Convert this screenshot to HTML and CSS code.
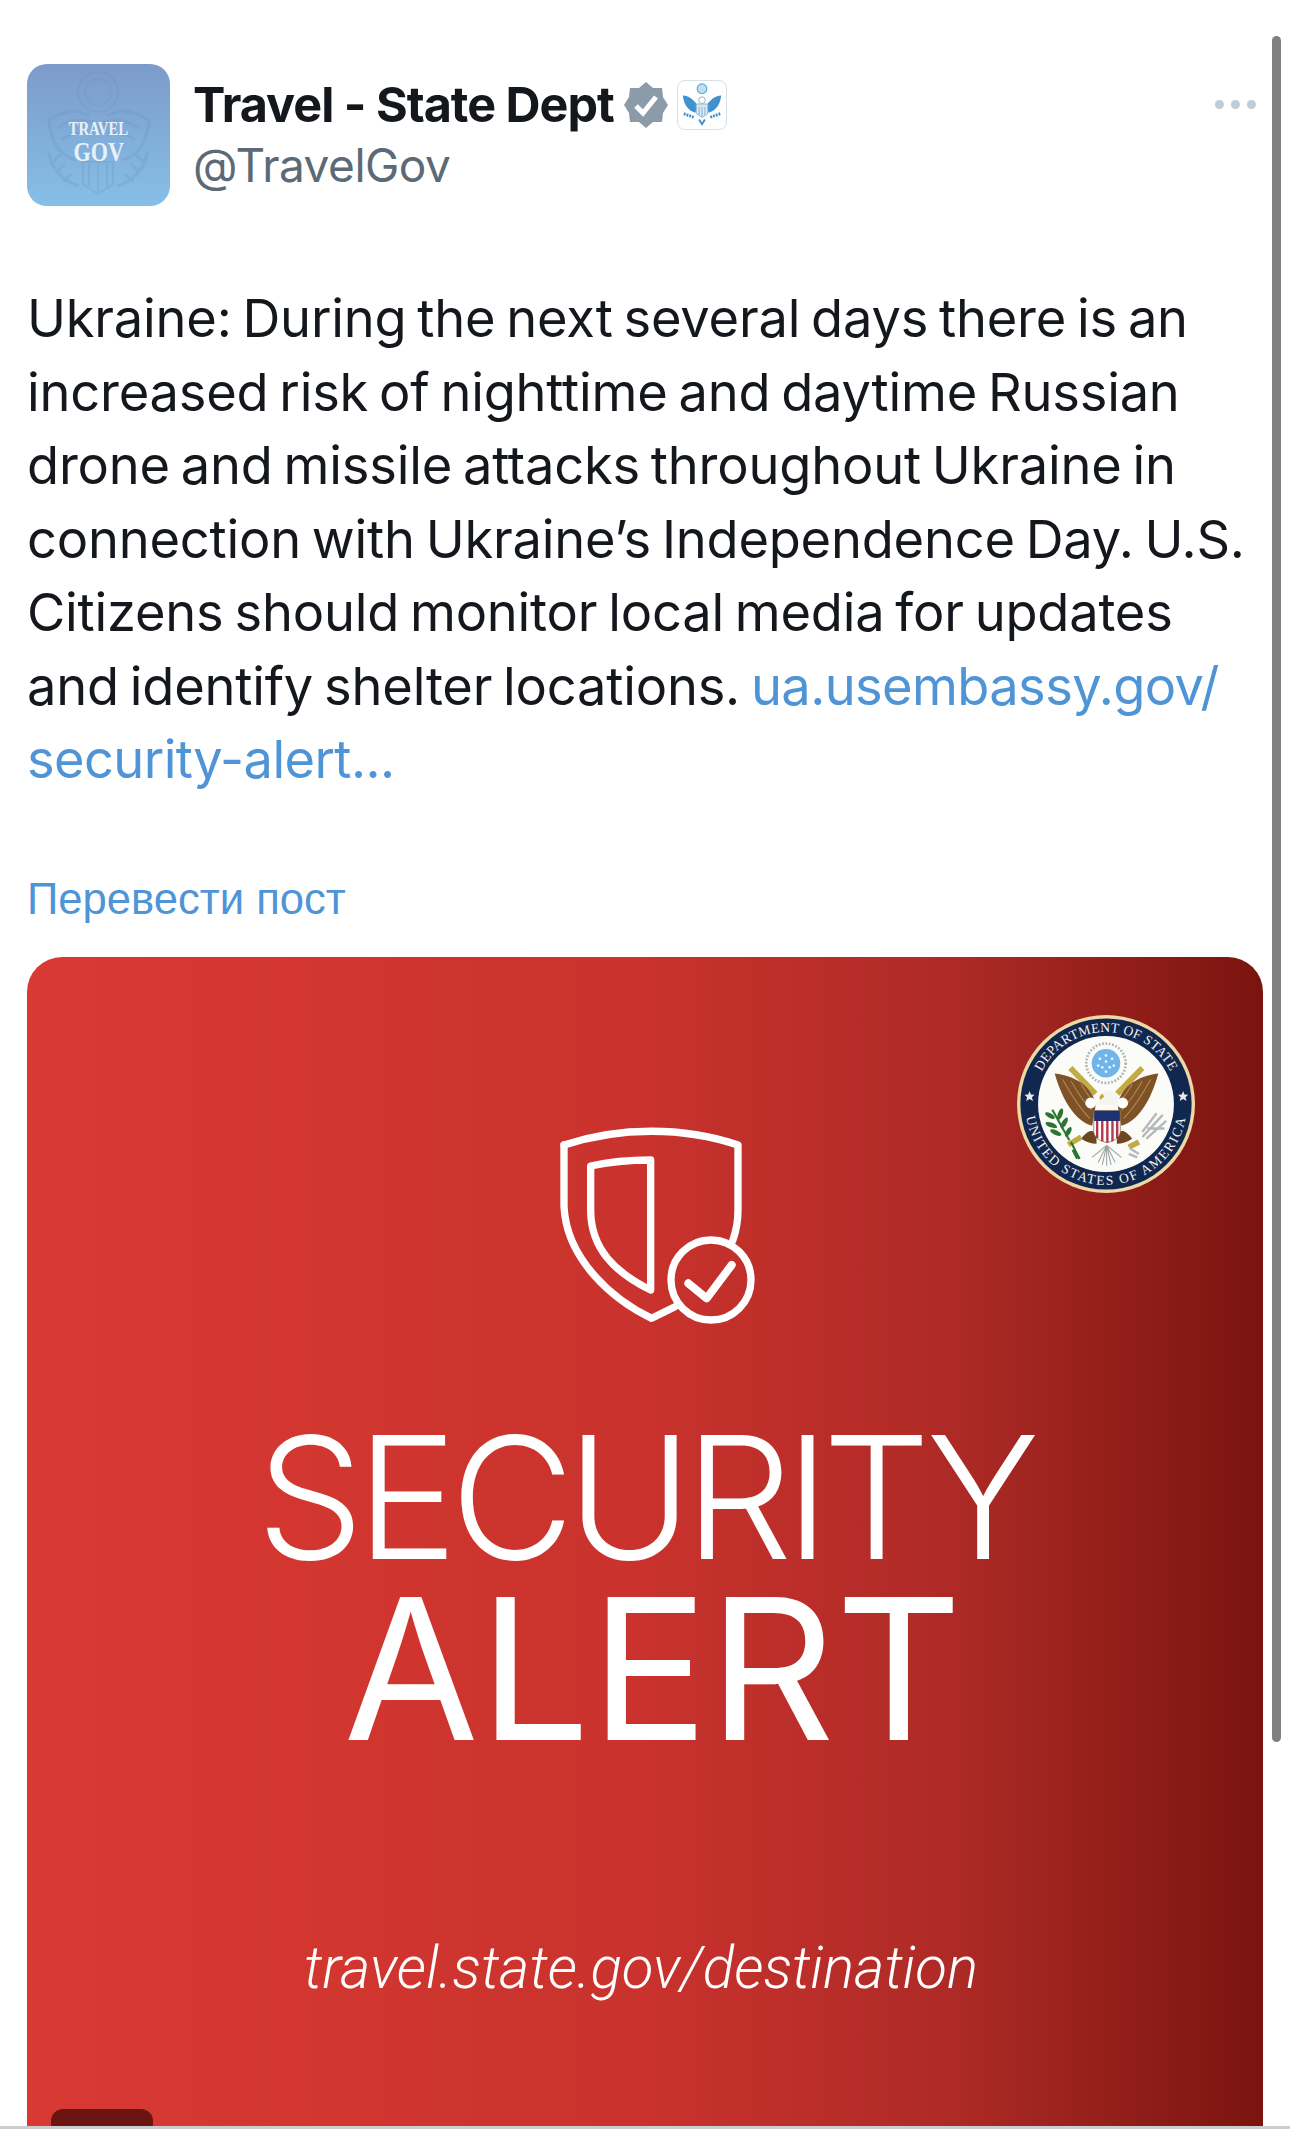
FILE: index.html
```html
<!DOCTYPE html>
<html lang="en">
<head>
<meta charset="utf-8">
<title>Travel - State Dept</title>
<link rel="stylesheet" href="styles.css">
</head>
<body>
<main class="post">
  <header class="head">
    <div class="avatar">
      <svg class="avatar-eagle" viewBox="0 0 143 143" aria-hidden="true">
        <g fill="none" stroke="#5f86b8" stroke-opacity=".18">
          <circle cx="71" cy="28" r="20" stroke-width="1.5"/>
          <circle cx="71" cy="28" r="13" stroke-width="3" stroke-dasharray="2 2"/>
          <path d="M62 52C48 44 38 46 22 56C24 76 30 90 48 96M66 58C52 54 44 56 30 64M62 70C50 68 42 70 34 76" stroke-width="3"/>
          <path d="M80 52C94 44 104 46 122 56C120 76 114 90 96 96M76 58C90 54 98 56 112 64M80 70C92 68 100 70 108 76" stroke-width="3"/>
          <path d="M22 88C24 104 34 116 52 122M34 90L26 98M38 100L30 108M44 110L36 118M120 88C118 104 108 116 90 122M108 90L116 98M104 100L112 108M98 110L106 118" stroke-width="3"/>
          <path d="M56 98V120L71 130L86 120V98H56ZM62 100V122M71 100V128M80 100V122" stroke-width="2"/>
        </g>
      </svg>
      <div class="avatar-word">
        <span class="avatar-travel">TRAVEL</span>
        <span class="avatar-gov">GOV</span>
      </div>
    </div>
    <div class="who">
      <div class="name-row">
        <span class="name">Travel - State Dept</span>
        <svg class="verified" viewBox="0 0 44 48" aria-hidden="true">
          <path d="M22 1L29 7L38 7L39 16L44 24L39 32L38 41L29 41L22 47L15 41L6 41L5 32L0 24L5 16L6 7L15 7Z" fill="#8c9baa"/>
          <path d="M12 25L19 32L32 16" fill="none" stroke="#fff" stroke-width="5"/>
        </svg>
        <span class="affiliate">
          <svg viewBox="0 0 50 50" aria-hidden="true">
            <circle cx="25" cy="8" r="5" fill="#bfe0f3" stroke="#5da5d8" stroke-width="1.2"/>
            <path d="M21 26C17 20 11 15 5 15C6 23 9 30 18 33Z" fill="#3f92cf"/>
            <path d="M29 26C33 20 39 15 45 15C44 23 41 30 32 33Z" fill="#3f92cf"/>
            <path d="M19 24H31V34L25 38L19 34Z" fill="#dbe9f3" stroke="#8fb4cf" stroke-width="1"/>
            <path d="M22 27V35M25 27V37M28 27V35" stroke="#7fb2d6" stroke-width="1"/>
            <circle cx="25" cy="20" r="3.5" fill="#fff" stroke="#8fb4cf"/>
            <path d="M6 34L17 38M44 34L33 38" fill="none" stroke="#3f92cf" stroke-width="3" stroke-dasharray="2 1"/>
            <path d="M22 40L25 45L28 40" fill="none" stroke="#3f92cf" stroke-width="2"/>
          </svg>
        </span>
      </div>
      <div class="handle">@TravelGov</div>
    </div>
    <div class="more" aria-label="More"><i></i><i></i><i></i></div>
  </header>

  <p class="body-text">Ukraine: During the next several days there is an<br>
increased risk of nighttime and daytime Russian<br>
drone and missile attacks throughout Ukraine in<br>
connection with Ukraine’s Independence Day. U.S.<br>
Citizens should monitor local media for updates<br>
and identify shelter locations. <a class="link" href="#">ua.usembassy.gov/<br>
security-alert...</a></p>

  <a class="translate" href="#">Перевести пост</a>

  <section class="card">
    <svg class="seal" viewBox="111 166 524 524" aria-hidden="true">
      <defs>
        <path id="arcTop" d="M161 428A212 212 0 0 1 585 428"/>
        <path id="arcBottom" d="M135 428A238 238 0 0 0 611 428"/>
      </defs>
      <circle cx="373" cy="428" r="262" fill="#ecd9a6"/>
      <circle cx="373" cy="428" r="252" fill="#10274f"/>
      <circle cx="373" cy="428" r="200" fill="#fbfbf8"/>
      <text class="seal-text seal-top"><textPath href="#arcTop" startOffset="50%" text-anchor="middle">DEPARTMENT OF STATE</textPath></text>
      <text class="seal-text seal-bottom"><textPath href="#arcBottom" startOffset="50%" text-anchor="middle">UNITED STATES OF AMERICA</textPath></text>
      <path d="M148 390l4 10 11 1-8 7 3 11-10-6-10 6 3-11-8-7 11-1zM600 390l4 10 11 1-8 7 3 11-10-6-10 6 3-11-8-7 11-1z" fill="#e8e8e8"/>
      <circle cx="373" cy="308" r="58" fill="none" stroke="#aab4b8" stroke-width="8" stroke-dasharray="5 5"/>
      <circle cx="373" cy="308" r="42" fill="#6fb4ea"/>
      <g fill="#e8f4fc">
        <circle cx="373" cy="285" r="4"/><circle cx="355" cy="295" r="4"/><circle cx="391" cy="295" r="4"/>
        <circle cx="373" cy="303" r="4"/><circle cx="350" cy="315" r="4"/><circle cx="396" cy="315" r="4"/>
        <circle cx="362" cy="320" r="4"/><circle cx="384" cy="320" r="4"/><circle cx="373" cy="333" r="4"/>
      </g>
      <path d="M268 322L342 398M480 322L406 398" stroke="#c2ab45" stroke-width="17" fill="none"/>
      <path d="M222 338C290 345 338 385 342 432C340 455 335 480 332 492C285 480 245 420 222 338Z" fill="#7e5226"/>
      <path d="M527 338C460 345 412 385 408 432C410 455 415 480 418 492C465 480 505 420 527 338Z" fill="#7e5226"/>
      <g fill="none" stroke="#b58b52" stroke-width="3">
        <path d="M245 355C270 400 295 440 325 470M270 360C290 395 310 425 330 445M300 370C315 395 325 410 338 425"/>
        <path d="M505 355C480 400 455 440 425 470M480 360C460 395 440 425 420 445M450 370C435 395 425 410 412 425"/>
      </g>
      <circle cx="328" cy="425" r="16" fill="#fff"/><circle cx="422" cy="425" r="16" fill="#fff"/>
      <path d="M355 430C350 400 365 388 385 390C405 395 412 410 408 432Z" fill="#f6f4ee"/>
      <path d="M362 398C355 402 352 410 356 416L368 406Z" fill="#c9a43e"/>
      <path d="M300 530C320 505 335 500 345 520L345 545C330 545 315 540 300 530ZM450 530C430 505 415 500 405 520L405 545C420 545 435 540 450 530Z" fill="#6e4620"/>
      <path d="M337 447H415V512C412 530 392 538 376 542C360 538 340 530 337 512Z" fill="#fff" stroke="#7a5a30" stroke-width="2"/>
      <path d="M338 448H414V478H338Z" fill="#1c3272"/>
      <path d="M347 478V528M362 478V538M377 478V541M392 478V538M406 478V528" stroke="#b5364a" stroke-width="7"/>
      <g stroke="#9aa2a4" stroke-width="3" fill="none">
        <path d="M375 550L375 610M375 550L350 600M375 550L400 600M375 550L332 585M375 550L418 585M375 550L362 607M375 550L388 607"/>
      </g>
      <path d="M262 548L300 525M470 540L440 555" stroke="#c2ab45" stroke-width="16" fill="none"/>
      <path d="M265 535L215 445M270 540L295 590" stroke="#2c7432" stroke-width="6" fill="none"/>
      <g fill="#2c7432">
        <ellipse cx="208" cy="462" rx="7" ry="16" transform="rotate(-60 208 462)"/>
        <ellipse cx="238" cy="458" rx="7" ry="18" transform="rotate(20 238 458)"/>
        <ellipse cx="212" cy="490" rx="7" ry="18" transform="rotate(-70 212 490)"/>
        <ellipse cx="250" cy="484" rx="7" ry="18" transform="rotate(30 250 484)"/>
        <ellipse cx="225" cy="512" rx="7" ry="18" transform="rotate(-65 225 512)"/>
        <ellipse cx="262" cy="510" rx="7" ry="16" transform="rotate(30 262 510)"/>
        <path d="M280 560L298 588L285 590L272 565Z"/>
      </g>
      <g stroke="#b4b8ba" stroke-width="7" fill="none">
        <path d="M480 525L540 460M492 530L550 478M480 510L522 455M495 500L545 500"/>
        <path d="M445 560L470 575M440 575L465 585"/>
      </g>
    </svg>
    <svg class="shield" viewBox="0 0 720 690" aria-hidden="true">
      <g fill="none" stroke="#fff" stroke-width="22" stroke-linejoin="round" stroke-linecap="round">
        <path d="M72 105C240 50 430 50 594 105V300C594 335 588 365 578 392"/>
        <path d="M72 105V290C80 450 220 570 335 625L405 590"/>
        <path d="M152 168C210 155 270 150 332 150V540C230 490 152 420 152 300Z"/>
        <circle cx="513" cy="510" r="120"/>
        <path d="M445 520L500 565L575 465" stroke-width="24"/>
      </g>
    </svg>
    <h2 class="security">SECURITY</h2>
    <h2 class="alert">ALERT</h2>
    <div class="dest">travel.state.gov/destination</div>
    <div class="media-badge"></div>
  </section>
</main>
<div class="scrollbar"></div>
<div class="bottom-line"></div>
</body>
</html>
```

FILE: styles.css
```css
html, body {
  margin: 0;
  padding: 0;
  height: 2129px;
  overflow: hidden;
  background: #fff;
}
.post {
  padding: 64px 27px 0;
  font-family: Inter, "Liberation Sans", sans-serif;
  color: #14181d;
}
.head {
  display: flex;
  align-items: flex-start;
}
.avatar {
  position: relative;
  flex: none;
  width: 143px;
  height: 142px;
  border-radius: 20px;
  background: linear-gradient(#7c9bcb, #86bfe7);
  overflow: hidden;
}
.avatar-eagle {
  position: absolute;
  inset: 0;
  width: 143px;
  height: 143px;
}
.avatar-word {
  position: relative;
  display: flex;
  flex-direction: column;
  align-items: center;
  padding-top: 55px;
  color: #e8f1f8;
  font-family: "Liberation Serif", serif;
  font-weight: 700;
}
.avatar-travel {
  font-size: 18px;
  line-height: 20px;
  transform: scaleX(.82);
}
.avatar-gov {
  font-size: 27px;
  line-height: 26px;
  transform: scaleX(.82);
}
.who {
  margin-left: 23px;
  padding-top: 13px;
}
.name-row {
  display: flex;
  align-items: center;
  height: 56px;
}
.name {
  font-size: 48.5px;
  font-weight: 700;
  letter-spacing: -1px;
  line-height: 56px;
}
.verified {
  width: 44px;
  height: 48px;
  margin-left: 10px;
}
.affiliate {
  box-sizing: border-box;
  width: 50px;
  height: 50px;
  margin-left: 9px;
  border: 1px solid #d5e1e8;
  border-radius: 8px;
  background: #fff;
}
.affiliate svg {
  display: block;
  width: 48px;
  height: 48px;
}
.handle {
  margin-top: 3px;
  font-size: 46px;
  line-height: 58px;
  color: #5c6a77;
  letter-spacing: -.5px;
}
.more {
  display: flex;
  gap: 7px;
  margin-left: auto;
  margin-top: 36px;
  margin-right: 7px;
}
.more i {
  width: 9px;
  height: 9px;
  border-radius: 50%;
  background: #c0ccd6;
}
.body-text {
  margin: 76px 0 0;
  font-size: 52.4px;
  line-height: 73.5px;
  white-space: nowrap;
  letter-spacing: -.2px;
  word-spacing: -3.6px;
}
.link {
  color: #4f94d6;
  text-decoration: none;
  letter-spacing: -.6px;
}
.translate {
  display: block;
  margin-top: 78px;
  font-family: "Liberation Sans", sans-serif;
  font-size: 43.6px;
  line-height: 48px;
  color: #4f94d6;
  text-decoration: none;
}
.card {
  position: relative;
  display: flex;
  flex-direction: column;
  align-items: center;
  box-sizing: border-box;
  width: 1236px;
  height: 1240px;
  margin-top: 34px;
  padding-top: 153px;
  border-radius: 35px;
  background: linear-gradient(90deg, #d93933 0%, #d1362f 25%, #c9322d 50%, #ae2a26 75%, #7a140f 100%);
  color: #fff;
  overflow: hidden;
}
.seal {
  position: absolute;
  top: 58px;
  right: 68px;
  width: 178px;
  height: 178px;
}
.seal-text {
  font-family: "Liberation Serif", serif;
  font-size: 40px;
  fill: #f2f2f2;
}
.seal-top {
  letter-spacing: 1px;
}
.seal-bottom {
  letter-spacing: 5px;
}
.shield {
  width: 240px;
  height: 230px;
  margin-left: 30px;
}
.security {
  margin: 92px 0 0 -1px;
  font-size: 170px;
  font-weight: 260;
  line-height: 130px;
  letter-spacing: -7.3px;
}
.alert {
  margin: 32px 0 0 16px;
  font-size: 196px;
  font-weight: 435;
  line-height: 150px;
  letter-spacing: .5px;
}
.dest {
  margin: 194px 0 0 -8px;
  font-size: 58.3px;
  font-weight: 300;
  font-style: italic;
  font-family: Roboto, sans-serif;
  line-height: 60px;
}
.media-badge {
  position: absolute;
  left: 24px;
  top: 1152px;
  width: 102px;
  height: 60px;
  border-radius: 12px;
  background: #6b1512;
}
.scrollbar {
  position: absolute;
  top: 36px;
  left: 1272px;
  width: 9px;
  height: 1706px;
  border-radius: 5px;
  background: #808080;
}
.bottom-line {
  position: absolute;
  left: 0;
  right: 0;
  top: 2126px;
  height: 3px;
  background: #c9ced2;
}
```
